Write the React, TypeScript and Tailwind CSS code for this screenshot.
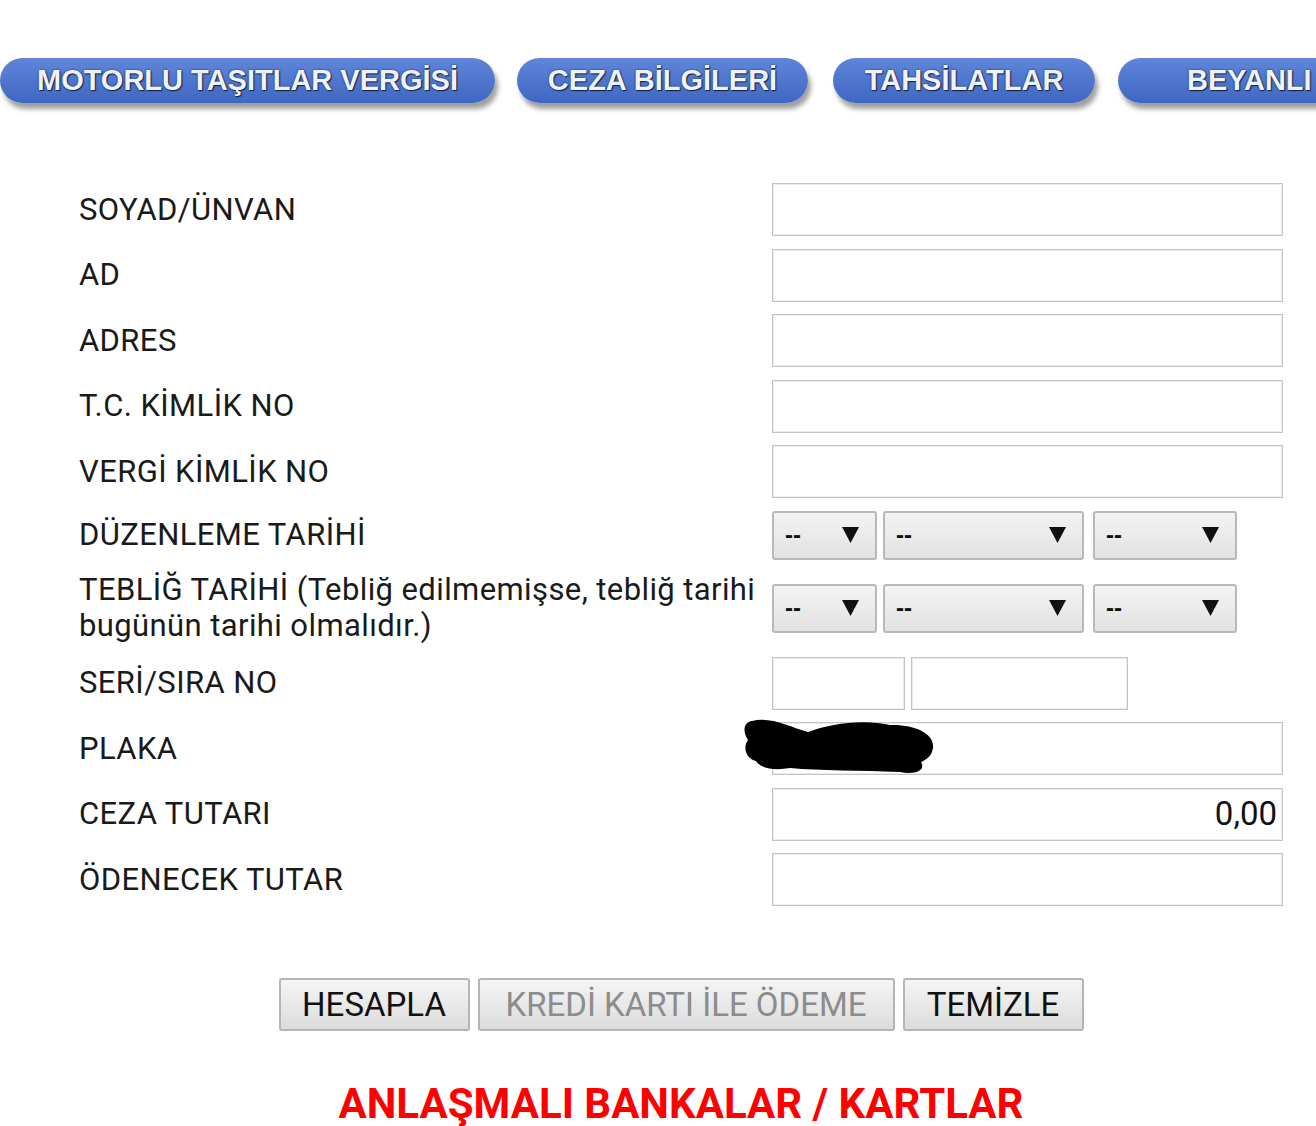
import React from 'react';

const tabs = [
  { label: 'MOTORLU TAŞITLAR VERGİSİ', cls: 'w-[495px] justify-center' },
  { label: 'CEZA BİLGİLERİ', cls: 'w-[291px] justify-center' },
  { label: 'TAHSİLATLAR', cls: 'w-[262px] justify-center' },
  { label: 'BEYANLI', cls: 'w-[260px] pl-[69px]' },
];

function TextBox({ className = '', value = '' }: { className?: string; value?: string }) {
  return (
    <div
      className={`h-[53px] border border-[#c4c4c4] bg-white shadow-[inset_0_0_0_1px_#ececec] flex items-center justify-end pr-[5px] text-[33px] text-[#111] ${className}`}
    >
      {value}
    </div>
  );
}

function Select({ w }: { w: string }) {
  return (
    <div
      className={`${w} h-[49px] rounded-[3px] border-2 border-[#b9b9b9] bg-linear-to-b from-[#f3f3f3] to-[#e2e2e2] flex items-center justify-between pl-[11px] pr-[16px]`}
    >
      <span className="text-[24px] leading-none text-[#111] font-['Liberation_Sans',sans-serif] font-bold">--</span>
      <svg width="17" height="16" viewBox="0 0 17 16">
        <path d="M0 0 H17 L8.5 16 Z" fill="#111" />
      </svg>
    </div>
  );
}

function Btn({ children, w, disabled }: { children: React.ReactNode; w: string; disabled?: boolean }) {
  return (
    <button
      className={`${w} h-[53px] rounded-[3px] border-2 border-[#b4b4b4] bg-linear-to-b from-[#f5f5f5] to-[#dcdcdc] text-[33px] leading-none ${
        disabled ? 'text-[#8c8c8c]' : 'text-[#111]'
      }`}
    >
      {children}
    </button>
  );
}

export default function App() {
  const dates = (
    <div className="flex items-center">
      <Select w="w-[105px]" />
      <div className="w-[6px]" />
      <Select w="w-[201px]" />
      <div className="w-[9px]" />
      <Select w="w-[144px]" />
    </div>
  );

  const rows: { label: React.ReactNode; control: React.ReactNode; h: string }[] = [
    { label: 'SOYAD/ÜNVAN', control: <TextBox />, h: 'h-[53px]' },
    { label: 'AD', control: <TextBox />, h: 'h-[53px]' },
    { label: 'ADRES', control: <TextBox />, h: 'h-[53px]' },
    { label: 'T.C. KİMLİK NO', control: <TextBox />, h: 'h-[53px]' },
    { label: 'VERGİ KİMLİK NO', control: <TextBox />, h: 'h-[53px]' },
    { label: 'DÜZENLEME TARİHİ', control: dates, h: 'h-[49px]' },
    {
      label: 'TEBLİĞ TARİHİ (Tebliğ edilmemişse, tebliğ tarihi bugünün tarihi olmalıdır.)',
      control: dates,
      h: 'h-[72px]',
    },
    {
      label: 'SERİ/SIRA NO',
      control: (
        <div className="flex gap-[6px]">
          <TextBox className="w-[133px]" />
          <TextBox className="w-[217px]" />
        </div>
      ),
      h: 'h-[53px]',
    },
    { label: 'PLAKA', control: <TextBox />, h: 'h-[53px]' },
    { label: 'CEZA TUTARI', control: <TextBox value="0,00" />, h: 'h-[53px]' },
    { label: 'ÖDENECEK TUTAR', control: <TextBox />, h: 'h-[53px]' },
  ];

  return (
    <div className="relative w-[1316px] h-[1126px] overflow-hidden bg-white font-['Roboto','Liberation_Sans',sans-serif]">
      <div className="flex pt-[58px] whitespace-nowrap">
        {tabs.map((t, i) => (
          <div
            key={t.label}
            className={`${t.cls} ${i === 0 ? 'ml-0' : i === 1 ? 'ml-[22px]' : i === 2 ? 'ml-[25px]' : 'ml-[23px]'} shrink-0 h-[45px] rounded-full bg-linear-to-b from-[#5f86da] to-[#3f67c2] shadow-[3px_6px_5px_rgba(0,0,0,0.38)] flex items-center font-['Liberation_Sans',Arial,sans-serif] font-bold text-[29px] text-[#eef2f9] [text-shadow:0_0_2px_rgba(20,30,70,0.9),1px_1px_1px_rgba(0,0,0,0.7)]`}
          >
            {t.label}
          </div>
        ))}
      </div>

      <div className="mt-[80px] pl-[79px] flex flex-col gap-[12.5px]">
        {rows.map((r, i) => (
          <div key={i} className={`flex items-center ${r.h}`}>
            <div className="w-[693px] pr-[8px] text-[31px] tracking-[0.4px] leading-[36px] text-[#1a1a1a]">
              {r.label}
            </div>
            <div className="w-[511px]">{r.control}</div>
          </div>
        ))}
      </div>

      <div className="mt-[72px] pl-[46px] flex justify-center gap-[8px]">
        <Btn w="w-[191px]">HESAPLA</Btn>
        <Btn w="w-[417px]" disabled>
          KREDİ KARTI İLE ÖDEME
        </Btn>
        <Btn w="w-[181px]">TEMİZLE</Btn>
      </div>

      <div className="mt-[52px] pl-[46px] text-center text-[42px] leading-[42px] font-bold text-[#ff0000]">
        ANLAŞMALI BANKALAR / KARTLAR
      </div>

      <svg
        className="absolute left-[740px] top-[712px]"
        width="200"
        height="66"
        viewBox="740 712 200 66"
      >
        <path
          d="M752 721 C770 716 790 727 808 732 C830 724 862 719 890 725 C915 724 935 734 933 748 C932 756 926 760 921 762 C926 770 916 775 900 772 C860 770 820 771 790 768 C774 771 760 768 756 761 C745 758 743 746 748 740 C742 731 744 722 752 721 Z"
          fill="#000"
        />
      </svg>
    </div>
  );
}
